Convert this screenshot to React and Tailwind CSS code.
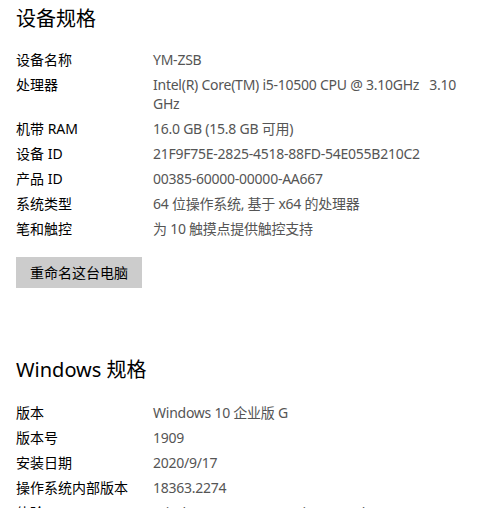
import React from "react";

const deviceSpecs = [
  { label: "设备名称", value: "YM-ZSB" },
  {
    label: "处理器",
    value: (
      <>
        Intel(R) Core(TM) i5-10500 CPU @ 3.10GHz&nbsp;&nbsp;&nbsp;3.10
        <br />
        GHz
      </>
    ),
  },
  { label: "机带 RAM", value: "16.0 GB (15.8 GB 可用)" },
  { label: "设备 ID", value: "21F9F75E-2825-4518-88FD-54E055B210C2" },
  { label: "产品 ID", value: "00385-60000-00000-AA667" },
  { label: "系统类型", value: "64 位操作系统, 基于 x64 的处理器" },
  { label: "笔和触控", value: "为 10 触摸点提供触控支持" },
];

const windowsSpecs = [
  { label: "版本", value: "Windows 10 企业版 G" },
  { label: "版本号", value: "1909" },
  { label: "安装日期", value: "2020/9/17" },
  { label: "操作系统内部版本", value: "18363.2274" },
  { label: "体验", value: "Windows Feature Experience Pack 120.2212.4190.0" },
];

function SpecRow({ label, value }) {
  return (
    <div className="flex text-[14px] leading-[19px]">
      <div className="w-[137px] shrink-0 text-black">{label}</div>
      <div className="flex-1 tracking-[-0.25px] text-[#555555]">{value}</div>
    </div>
  );
}

export default function App() {
  return (
    <div
      className="h-[508px] w-[500px] overflow-hidden bg-white px-4 pt-[5px]"
      style={{ fontFamily: '"Noto Sans", "Noto Sans CJK SC", sans-serif' }}
    >
      {/* 设备规格 */}
      <h2 className="text-[20px] leading-7 text-black">设备规格</h2>
      <div className="mt-[17px] flex flex-col gap-[6px]">
        {deviceSpecs.map((s) => (
          <SpecRow key={s.label} {...s} />
        ))}
      </div>

      <button className="mt-[19px] h-[31px] w-[126px] bg-[#cccccc] text-[14px] text-black">
        重命名这台电脑
      </button>

      {/* Windows 规格 */}
      <h2 className="mt-[68px] text-[20px] leading-7 text-black">Windows 规格</h2>
      <div className="mt-[19px] flex flex-col gap-[6px]">
        {windowsSpecs.map((s) => (
          <SpecRow key={s.label} {...s} />
        ))}
      </div>
    </div>
  );
}
